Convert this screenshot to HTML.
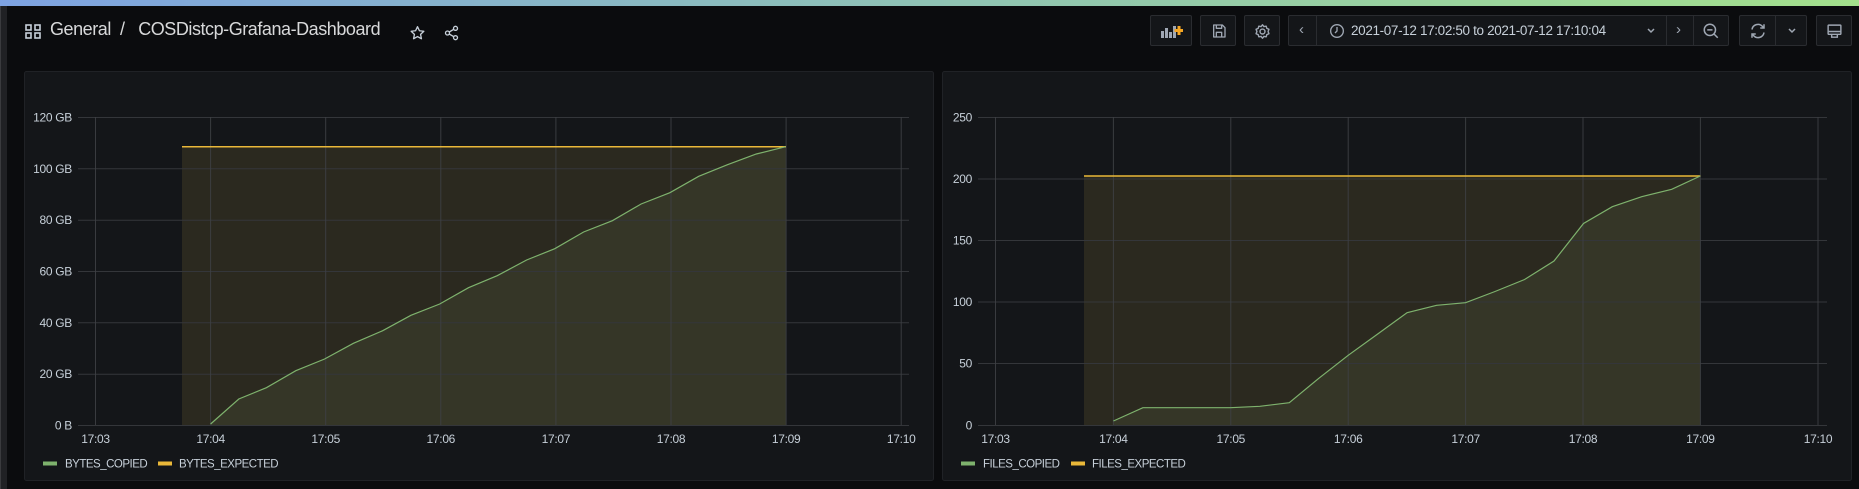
<!DOCTYPE html>
<html><head><meta charset="utf-8"><style>
html,body{margin:0;padding:0;background:#0b0c0e;width:1859px;height:489px;overflow:hidden;font-family:"Liberation Sans",sans-serif;}
.abs{position:absolute;}
.btn{position:absolute;top:15px;height:31px;border:1px solid #2a2c30;background:#141619;border-radius:2px;box-sizing:border-box;}
</style></head><body>
<div class="abs" style="left:0;top:0;width:1859px;height:6px;background:linear-gradient(90deg,#7ea3e2,#8fc3b4 50%,#a3e08c);"></div>
<div class="abs" style="left:0;top:6px;width:7px;height:483px;background:#202124;border-left:1px solid #3a3b3e;box-sizing:border-box;"></div>
<!-- title -->
<svg class="abs" style="left:25px;top:24px" width="16" height="15" viewBox="0 0 16 15"><g fill="none" stroke="#c7d0d9" stroke-width="1.6"><rect x="1" y="1" width="5" height="5"/><rect x="10" y="1" width="5" height="5"/><rect x="1" y="9" width="5" height="5"/><rect x="10" y="9" width="5" height="5"/></g></svg>
<div class="abs" style="left:50px;top:19px;font-size:18px;letter-spacing:-0.45px;color:#d8d9da;white-space:nowrap;">General&nbsp;&nbsp;/&nbsp;&nbsp;&nbsp;COSDistcp-Grafana-Dashboard</div>
<svg class="abs" style="left:409px;top:25px" width="17" height="16" viewBox="0 0 24 24"><path d="M12 2.5l2.9 6.1 6.6.8-4.9 4.6 1.3 6.6L12 17.3l-5.9 3.3 1.3-6.6-4.9-4.6 6.6-.8z" fill="none" stroke="#c7d0d9" stroke-width="2" stroke-linejoin="round"/></svg>
<svg class="abs" style="left:443px;top:25px" width="17" height="16" viewBox="0 0 24 24"><g fill="none" stroke="#c7d0d9" stroke-width="2"><circle cx="18" cy="5" r="3"/><circle cx="6" cy="12" r="3"/><circle cx="18" cy="19" r="3"/><path d="M8.6 10.5l6.8-4M8.6 13.5l6.8 4"/></g></svg>
<!-- buttons -->
<div class="btn" style="left:1150px;width:42px;"><svg class="abs" style="left:10px;top:8px" width="22" height="14" viewBox="0 0 22 14"><g fill="#9fa7b3"><rect x="0" y="7" width="3" height="7"/><rect x="4" y="4" width="3" height="10"/><rect x="8" y="8" width="3" height="6"/><rect x="12" y="2" width="3" height="12"/></g><path d="M18 2v9M13.5 6.5h9" stroke="#f5a623" stroke-width="3"/></svg></div>
<div class="btn" style="left:1200px;width:36px;"><svg class="abs" style="left:10px;top:7px" width="16" height="16" viewBox="0 0 24 24"><path d="M4 3h13l4 4v14H4z M8 3v5h8V3 M8 21v-7h8v7" fill="none" stroke="#9fa7b3" stroke-width="2" stroke-linejoin="round"/></svg></div>
<div class="btn" style="left:1244px;width:36px;"><svg class="abs" style="left:9px;top:7px" width="17" height="17" viewBox="0 0 24 24"><g fill="none" stroke="#9fa7b3" stroke-width="2"><circle cx="12" cy="12" r="3.5"/><path d="M12 2.5l2 2.6 3.2-.6.9 3.1 3 1.3-1.2 3.1 1.2 3.1-3 1.3-.9 3.1-3.2-.6-2 2.6-2-2.6-3.2.6-.9-3.1-3-1.3 1.2-3.1-1.2-3.1 3-1.3.9-3.1 3.2.6z" stroke-linejoin="round"/></g></svg></div>
<div class="btn" style="left:1288px;width:441px;">
 <div class="abs" style="left:27px;top:0;width:1px;height:29px;background:#2a2c30"></div>
 <div class="abs" style="left:10px;top:5px;color:#9fa7b3;font-size:15px;">&#8249;</div>
 <svg class="abs" style="left:40px;top:7px" width="16" height="16" viewBox="0 0 24 24"><g fill="none" stroke="#9fa7b3" stroke-width="2"><circle cx="12" cy="12" r="9.5"/><path d="M12 6v6l-3 3"/></g></svg>
 <div class="abs" style="left:62px;top:7px;color:#c7d0d9;font-size:13.5px;letter-spacing:-0.35px;white-space:nowrap;">2021-07-12 17:02:50 to 2021-07-12 17:10:04</div>
 <svg class="abs" style="left:357px;top:11px" width="10" height="8" viewBox="0 0 10 8"><path d="M2 2l3 3 3-3" fill="none" stroke="#9fa7b3" stroke-width="1.5"/></svg>
 <div class="abs" style="left:377px;top:0;width:1px;height:29px;background:#2a2c30"></div>
 <div class="abs" style="left:387px;top:5px;color:#9fa7b3;font-size:15px;">&#8250;</div>
 <div class="abs" style="left:404px;top:0;width:1px;height:29px;background:#2a2c30"></div>
 <svg class="abs" style="left:413px;top:6px" width="18" height="18" viewBox="0 0 24 24"><g fill="none" stroke="#9fa7b3" stroke-width="2"><circle cx="10.5" cy="10.5" r="7.5"/><path d="M16 16l5 5M7 10.5h7"/></g></svg>
</div>
<div class="btn" style="left:1739px;width:68px;">
 <svg class="abs" style="left:9px;top:6px" width="18" height="18" viewBox="0 0 24 24"><g fill="none" stroke="#9fa7b3" stroke-width="2"><path d="M4 10a8 8 0 0 1 14-4l2 2M20 14a8 8 0 0 1-14 4l-2-2"/><path d="M20 3v5h-5M4 21v-5h5"/></g></svg>
 <div class="abs" style="left:35px;top:0;width:1px;height:29px;background:#2a2c30"></div>
 <svg class="abs" style="left:47px;top:11px" width="10" height="8" viewBox="0 0 10 8"><path d="M2 2l3 3 3-3" fill="none" stroke="#9fa7b3" stroke-width="1.5"/></svg>
</div>
<div class="btn" style="left:1816px;width:36px;"><svg class="abs" style="left:9px;top:7px" width="17" height="17" viewBox="0 0 24 24"><g fill="none" stroke="#9fa7b3" stroke-width="2"><rect x="3" y="3" width="18" height="13" rx="1"/><path d="M3 12h18M8 16v4h8v-4"/></g></svg></div>

<svg class="abs" style="left:0;top:0" width="1859" height="489" font-family="Liberation Sans, sans-serif">
 <rect x="24.5" y="71.5" width="909" height="409" fill="#141619" stroke="#202226" rx="2"/>
 <rect x="942.5" y="71.5" width="909" height="409" fill="#141619" stroke="#202226" rx="2"/>
 <!-- LEFT chart -->
 <g>
  <polygon points="182,146.7 786,146.7 786,425 182,425" fill="#2b291f"/>
  <polygon points="210.6,424 238.8,399 266.4,387.7 295.8,370.7 324.6,359 353.4,343.3 382.7,330.7 410.9,315.3 439.7,304 468.5,287.7 497.2,275.7 526.6,260 554.8,248.7 583.6,232 612.4,220.7 641.1,204 669.9,192.7 698.7,176.3 727.5,164.7 756.3,154 785.7,146.7 785.7,425 210.6,425" fill="#353627"/>
  <g stroke="#34363a" stroke-width="1">
   <path d="M78 117.5H909M78 168.8H909M78 220.2H909M78 271.5H909M78 322.8H909M78 374.2H909M78 425.5H909"/>
  </g>
  <g stroke="#3e4044" stroke-width="1" opacity="0.9">
   <path d="M95.5 117V425M210.6 117V425M325.7 117V425M440.8 117V425M555.9 117V425M671 117V425M786.1 117V425M901.2 117V425"/>
  </g>
  <path d="M182 146.7H786" stroke="#eab839" stroke-width="1.5"/>
  <polyline points="210.6,424 238.8,399 266.4,387.7 295.8,370.7 324.6,359 353.4,343.3 382.7,330.7 410.9,315.3 439.7,304 468.5,287.7 497.2,275.7 526.6,260 554.8,248.7 583.6,232 612.4,220.7 641.1,204 669.9,192.7 698.7,176.3 727.5,164.7 756.3,154 785.7,146.7" fill="none" stroke="#7eb26d" stroke-width="1.2"/>
  <g fill="#c7d0d9" font-size="12" text-anchor="end" letter-spacing="-0.3">
   <text x="72" y="121.5">120 GB</text><text x="72" y="172.8">100 GB</text><text x="72" y="224.2">80 GB</text><text x="72" y="275.5">60 GB</text><text x="72" y="326.8">40 GB</text><text x="72" y="378.2">20 GB</text><text x="72" y="429.5">0 B</text>
  </g>
  <g fill="#c7d0d9" font-size="12" text-anchor="middle" letter-spacing="-0.3">
   <text x="95.5" y="443">17:03</text><text x="210.6" y="443">17:04</text><text x="325.7" y="443">17:05</text><text x="440.8" y="443">17:06</text><text x="555.9" y="443">17:07</text><text x="671" y="443">17:08</text><text x="786.1" y="443">17:09</text><text x="901.2" y="443">17:10</text>
  </g>
  <rect x="43" y="461.5" width="14" height="4" fill="#7eb26d"/>
  <text x="65" y="467.5" fill="#c7d0d9" font-size="11.5" letter-spacing="-0.5">BYTES_COPIED</text>
  <rect x="158" y="461.5" width="14" height="4" fill="#eab839"/>
  <text x="179" y="467.5" fill="#c7d0d9" font-size="11.5" letter-spacing="-0.5">BYTES_EXPECTED</text>
 </g>
 <!-- RIGHT chart -->
 <g>
  <polygon points="1084,176 1700.3,176 1700.3,425 1084,425" fill="#2b291f"/>
  <polygon points="1113.4,421 1142.9,407.7 1172.3,407.7 1201.3,407.7 1230.4,407.7 1259.8,406.3 1289.3,402.7 1318.8,378.3 1348.2,355.3 1377.7,334 1407.1,312.7 1436.6,305.3 1465.6,302.7 1495,291.5 1524.6,279.5 1554,261 1583.5,223.5 1612.3,206.7 1641.7,196.7 1671.7,189.3 1700.3,176 1700.3,425 1113.4,425" fill="#353627"/>
  <g stroke="#34363a" stroke-width="1">
   <path d="M978 117.5H1827M978 179H1827M978 240.5H1827M978 302H1827M978 363.5H1827M978 425.5H1827"/>
  </g>
  <g stroke="#3e4044" stroke-width="1" opacity="0.9">
   <path d="M995.5 117V425M1113.4 117V425M1230.8 117V425M1348.2 117V425M1465.6 117V425M1583 117V425M1700.4 117V425M1818 117V425"/>
  </g>
  <path d="M1084 176H1700.3" stroke="#eab839" stroke-width="1.5"/>
  <polyline points="1113.4,421 1142.9,407.7 1172.3,407.7 1201.3,407.7 1230.4,407.7 1259.8,406.3 1289.3,402.7 1318.8,378.3 1348.2,355.3 1377.7,334 1407.1,312.7 1436.6,305.3 1465.6,302.7 1495,291.5 1524.6,279.5 1554,261 1583.5,223.5 1612.3,206.7 1641.7,196.7 1671.7,189.3 1700.3,176" fill="none" stroke="#7eb26d" stroke-width="1.2"/>
  <g fill="#c7d0d9" font-size="12" text-anchor="end" letter-spacing="-0.3">
   <text x="972" y="121.5">250</text><text x="972" y="183">200</text><text x="972" y="244.5">150</text><text x="972" y="306">100</text><text x="972" y="367.5">50</text><text x="972" y="429.5">0</text>
  </g>
  <g fill="#c7d0d9" font-size="12" text-anchor="middle" letter-spacing="-0.3">
   <text x="995.5" y="443">17:03</text><text x="1113.4" y="443">17:04</text><text x="1230.8" y="443">17:05</text><text x="1348.2" y="443">17:06</text><text x="1465.6" y="443">17:07</text><text x="1583" y="443">17:08</text><text x="1700.4" y="443">17:09</text><text x="1818" y="443">17:10</text>
  </g>
  <rect x="961" y="461.5" width="14" height="4" fill="#7eb26d"/>
  <text x="983" y="467.5" fill="#c7d0d9" font-size="11.5" letter-spacing="-0.5">FILES_COPIED</text>
  <rect x="1071" y="461.5" width="14" height="4" fill="#eab839"/>
  <text x="1092" y="467.5" fill="#c7d0d9" font-size="11.5" letter-spacing="-0.5">FILES_EXPECTED</text>
 </g>
</svg>
</body></html>
